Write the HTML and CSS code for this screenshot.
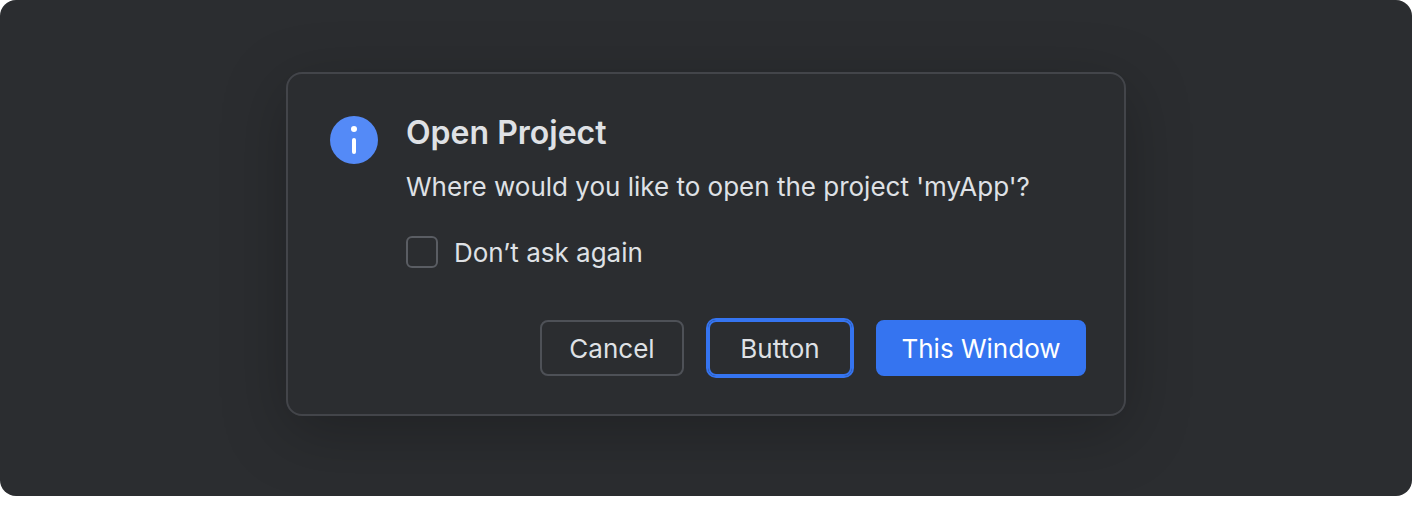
FILE: index.html
```html
<!DOCTYPE html>
<html lang="en">
<head>
<meta charset="utf-8">
<title>Open Project</title>
<link rel="stylesheet" href="styles.css">
</head>
<body>
<main class="stage">
  <section class="dialog" role="dialog" aria-labelledby="dialog-title">
    <svg class="icon" viewBox="0 0 48 48" aria-hidden="true">
      <circle cx="24" cy="24" r="24" fill="#548af7"/>
      <circle cx="24" cy="13" r="3" fill="#fff"/>
      <rect x="22" y="22" width="4" height="16" rx="2" fill="#fff"/>
    </svg>
    <div class="content">
      <h1 class="title" id="dialog-title">Open Project</h1>
      <p class="message">Where would you like to open the project 'myApp'?</p>
      <label class="option"><input class="checkbox" type="checkbox"><span class="option-text">Don’t ask again</span></label>
    </div>
    <div class="actions">
      <button class="button" type="button">Cancel</button>
      <button class="button button-focused" type="button">Button</button>
      <button class="button button-primary" type="button">This Window</button>
    </div>
  </section>
</main>
</body>
</html>
```
FILE: styles.css
```css
body {
  margin: 0;
  background: #fff;
  font-family: Inter, "Liberation Sans", sans-serif;
}

.stage {
  display: flex;
  justify-content: center;
  padding: 72px 24px 80px;
  border-radius: 16px;
  background: #2b2d30;
}

.dialog {
  display: grid;
  grid-template-columns: 48px 1fr;
  column-gap: 28px;
  box-sizing: border-box;
  width: 100%;
  max-width: 840px;
  padding: 38px 38px 38px 42px;
  border: 2px solid #43454a;
  border-radius: 16px;
  background: #2b2d30;
  box-shadow: 0 16px 64px rgba(0, 0, 0, 0.25);
  color: #dfe1e5;
  font-size: 26px;
  line-height: 32px;
}

.icon {
  width: 48px;
  height: 48px;
  margin-top: 4px;
}

.content {
  padding-top: 1px;
}

.title {
  margin: 0;
  font-size: 32px;
  font-weight: 600;
  line-height: 40px;
}

.message {
  margin: 18px 0 0;
}

.option {
  display: flex;
  align-items: center;
  gap: 16px;
  width: fit-content;
  margin-top: 32px;
}

.option-text {
  padding-top: 2px;
}

.checkbox {
  appearance: none;
  box-sizing: border-box;
  width: 32px;
  height: 32px;
  margin: 0;
  border: 2px solid #5a5d63;
  border-radius: 6px;
}

.actions {
  display: flex;
  grid-column: 1 / -1;
  justify-content: flex-end;
  gap: 24px;
  margin-top: 51px;
}

.button {
  box-sizing: border-box;
  min-width: 144px;
  height: 56px;
  padding: 2px 22px 0;
  border: 2px solid #4e5157;
  border-radius: 8px;
  background: transparent;
  color: inherit;
  font: inherit;
}

.button-focused {
  border-color: #3574f0;
  box-shadow: 0 0 0 2px #3574f0;
}

.button-primary {
  min-width: 210px;
  border-color: #3574f0;
  background: #3574f0;
  color: #fff;
}
```
